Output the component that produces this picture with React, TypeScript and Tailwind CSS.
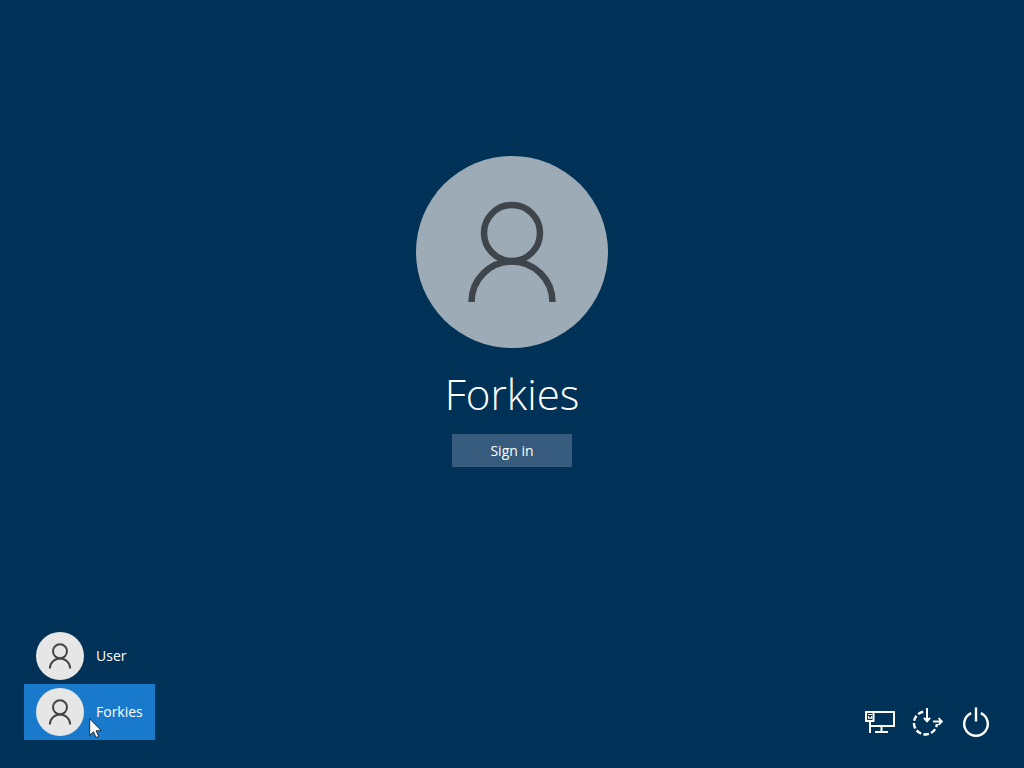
import clsx from 'clsx'

interface User {
  id: string
  name: string
}

const users: User[] = [
  { id: 'user', name: 'User' },
  { id: 'forkies', name: 'Forkies' },
]

const selectedId = 'forkies'

function PersonIcon({ strokeWidth = 6.5 }: { strokeWidth?: number }) {
  return (
    <svg viewBox="0 0 192 192" fill="none" stroke="currentColor" strokeWidth={strokeWidth} className="size-full" aria-hidden="true">
      <circle cx="96" cy="77" r="28" />
      <path d="M55.5 146a40.5 40.5 0 0 1 81 0" />
    </svg>
  )
}

function NetworkIcon() {
  return (
    <svg viewBox="0 0 32 32" fill="none" stroke="currentColor" strokeWidth="2" className="size-8" aria-hidden="true">
      <path d="M1 6h29v14H6" />
      <path d="M2 6v9h7.5V6M6 15v12" />
      <path d="M4 8.5h4M4.5 10v2.2h3V10" strokeWidth="1.2" />
      <path d="M17.5 20v6M11 26h13" />
    </svg>
  )
}

function EaseOfAccessIcon() {
  return (
    <svg viewBox="0 0 32 32" fill="none" stroke="currentColor" strokeWidth="2.4" className="size-8" aria-hidden="true">
      <path d="M11.2 5.7A11.5 11.5 0 1 0 24.9 18" strokeDasharray="5.6 2.3" />
      <path d="M15 2v12M21 15.5h8" strokeWidth="2" />
      <path d="M11.2 12.4l1.2-1.2 2.6 1.8 2.6-1.8 1.2 1.2L15 16.8zM26 12.6l1.2-1.2 4 4.1-4 4.1-1.2-1.2 2-2.9z" fill="currentColor" stroke="none" />
    </svg>
  )
}

function PowerIcon() {
  return (
    <svg viewBox="0 0 32 32" fill="none" stroke="currentColor" strokeWidth="2.4" className="size-8" aria-hidden="true">
      <path d="M11.2 7.2a11.8 11.8 0 1 0 9.6 0M16 1.5v14" />
    </svg>
  )
}

function Cursor() {
  return (
    <svg viewBox="0 0 12 19" className="pointer-events-none absolute top-[34px] left-[65px] h-5 w-[13px]" aria-hidden="true">
      <path d="M.5.8v15.7l3.6-3.4 2.4 5.4 2.5-1.1-2.4-5.3h4.9z" fill="#fff" stroke="#10151c" strokeWidth=".8" />
    </svg>
  )
}

const actions = [
  { label: 'Network', icon: <NetworkIcon /> },
  { label: 'Ease of access', icon: <EaseOfAccessIcon /> },
  { label: 'Power', icon: <PowerIcon /> },
]

export default function App() {
  return (
    <div className="flex min-h-screen flex-col bg-[#003257] font-['Open_Sans','Noto_Sans',sans-serif] text-white">
      <main className="flex flex-1 flex-col items-center pt-39">
        <div className="size-48 rounded-full bg-[#9cabb6] text-[#3f464b]">
          <PersonIcon />
        </div>
        <h1 className="mt-4 text-[42px] leading-[60px] font-light">Forkies</h1>
        <button type="button" className="mt-[10px] h-[33px] w-30 bg-[#365b7c] text-sm">
          Sign in
        </button>
      </main>

      <footer className="flex items-end justify-between px-6 pb-7">
        <ul>
          {users.map((user) => (
            <li key={user.id} className="relative">
              <button
                type="button"
                className={clsx(
                  'flex h-14 items-center gap-3 px-3 text-sm',
                  user.id === selectedId && 'bg-[#1979ca]',
                )}
              >
                <span className="size-12 rounded-full bg-[#e6e6e6] text-[#444444]">
                  <PersonIcon strokeWidth={8} />
                </span>
                {user.name}
              </button>
              {user.id === selectedId && <Cursor />}
            </li>
          ))}
        </ul>

        <div className="flex">
          {actions.map((action) => (
            <button
              key={action.label}
              type="button"
              aria-label={action.label}
              className="flex h-9 w-12 items-center justify-center"
            >
              {action.icon}
            </button>
          ))}
        </div>
      </footer>
    </div>
  )
}
